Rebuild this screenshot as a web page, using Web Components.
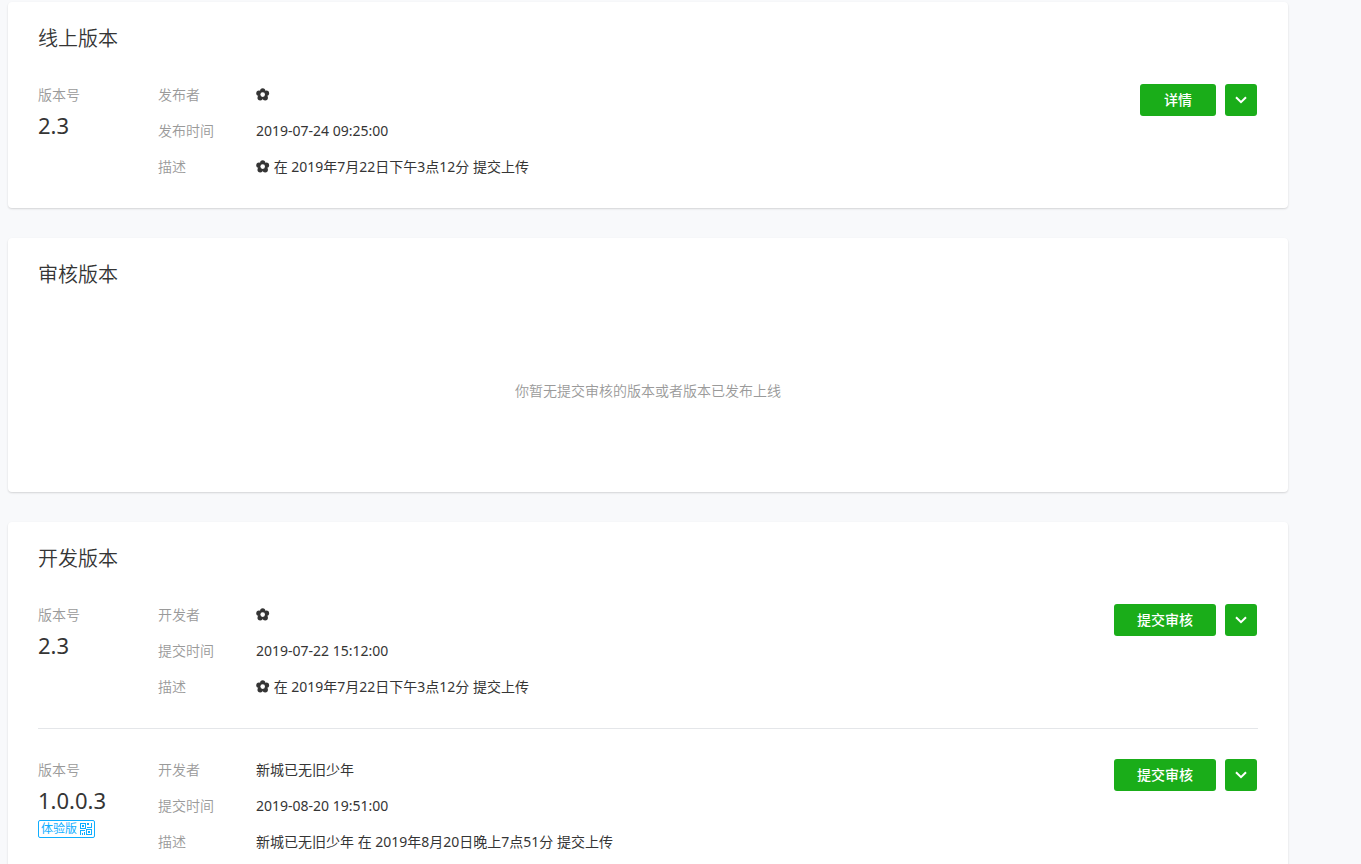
<!DOCTYPE html>
<html lang="zh-CN">
<head>
<meta charset="utf-8">
<meta name="viewport" content="width=device-width, initial-scale=1">
<title>版本管理</title>
<style>
  body {
    margin: 0;
    padding: 2px 73px 30px 8px;
    background: #f8f9fb;
    color: #353535;
    font: 400 14px/22px "Noto Sans", "Noto Sans CJK SC", sans-serif;
  }
  main {
    display: flex;
    flex-direction: column;
    gap: 30px;
  }
</style>
</head>
<body>
<main>
  <version-card heading="线上版本">
    <version-item number="2.3" action="详情">
      <version-field label="发布者"><flower-icon></flower-icon></version-field>
      <version-field label="发布时间">2019-07-24 09:25:00</version-field>
      <version-field label="描述"><flower-icon></flower-icon> 在 2019年7月22日下午3点12分 提交上传</version-field>
    </version-item>
  </version-card>

  <version-card heading="审核版本">
    <empty-tip>你暂无提交审核的版本或者版本已发布上线</empty-tip>
  </version-card>

  <version-card heading="开发版本">
    <version-item number="2.3" action="提交审核">
      <version-field label="开发者"><flower-icon></flower-icon></version-field>
      <version-field label="提交时间">2019-07-22 15:12:00</version-field>
      <version-field label="描述"><flower-icon></flower-icon> 在 2019年7月22日下午3点12分 提交上传</version-field>
    </version-item>
    <version-item number="1.0.0.3" action="提交审核">
      <trial-badge slot="badge">体验版</trial-badge>
      <version-field label="开发者">新城已无旧少年</version-field>
      <version-field label="提交时间">2019-08-20 19:51:00</version-field>
      <version-field label="描述">新城已无旧少年 在 2019年8月20日晚上7点51分 提交上传</version-field>
    </version-item>
  </version-card>
</main>

<script>
function define(name, styles, template) {
  customElements.define(name, class extends HTMLElement {
    connectedCallback() {
      if (this.shadowRoot) return;
      const shadow = this.attachShadow({ mode: 'open' });
      shadow.innerHTML = `<style>${styles}</style>${template(this)}`;
    }
  });
}

define('version-card', `
  :host {
    display: block;
    padding: 23px 30px 30px;
    background: #fff;
    border-radius: 4px;
    box-shadow: 0 1px 2px rgba(0, 0, 0, .15);
  }
  h2 {
    margin: 0 0 31px;
    font-size: 20px;
    font-weight: 350;
    line-height: 28px;
  }
  ::slotted(version-item:not(:first-of-type)) {
    margin-top: 30px;
    padding-top: 30px;
    border-top: 1px solid #e4e6e9;
  }
`, el => `
  <h2>${el.getAttribute('heading')}</h2>
  <slot></slot>
`);

define('version-item', `
  :host {
    display: flex;
    align-items: flex-start;
  }
  .version {
    flex: 0 0 120px;
    display: flex;
    flex-direction: column;
    align-items: flex-start;
  }
  .label {
    color: #9a9a9a;
    font-weight: 350;
  }
  .number {
    margin: 3px 0 4px;
    font-size: 22px;
    line-height: 32px;
  }
  .fields {
    flex: 1;
    display: flex;
    flex-direction: column;
    gap: 14px;
  }
  .actions {
    display: flex;
    gap: 9px;
    padding-right: 1px;
  }
`, el => `
  <div class="version">
    <span class="label">版本号</span>
    <span class="number">${el.getAttribute('number')}</span>
    <slot name="badge"></slot>
  </div>
  <div class="fields"><slot></slot></div>
  <div class="actions">
    <primary-button>${el.getAttribute('action')}</primary-button>
    <more-button></more-button>
  </div>
`);

define('version-field', `
  :host {
    display: flex;
  }
  .label {
    flex: 0 0 98px;
    color: #9a9a9a;
    font-weight: 350;
  }
`, el => `
  <span class="label">${el.getAttribute('label')}</span>
  <span><slot></slot></span>
`);

define('flower-icon', `
  :host {
    display: inline-block;
    vertical-align: -1px;
  }
  svg {
    display: block;
  }
`, () => `
  <svg width="14" height="13" viewBox="0 0 14 13" role="img" aria-label="✿">
    <g fill="currentColor">
      <circle cx="6.7" cy="2.8" r="2.6"/>
      <circle cx="10.4" cy="5.2" r="2.7"/>
      <circle cx="9.2" cy="9.8" r="2.7"/>
      <circle cx="4.2" cy="9.8" r="2.7"/>
      <circle cx="3" cy="5.2" r="2.7"/>
      <circle cx="6.7" cy="6.8" r="3.6"/>
    </g>
    <circle cx="6.7" cy="6.6" r="2.3" fill="#fff"/>
  </svg>
`);

define('empty-tip', `
  :host {
    display: flex;
    align-items: center;
    justify-content: center;
    min-height: 142px;
    color: #9a9a9a;
    font-weight: 350;
  }
`, () => `<slot></slot>`);

define('trial-badge', `
  :host {
    display: block;
  }
  a {
    display: flex;
    align-items: center;
    gap: 3px;
    padding: 0 2px;
    border: 1px solid #10aeff;
    border-radius: 2px;
    color: #10aeff;
    font-size: 12px;
    line-height: 16px;
    text-decoration: none;
  }
  svg {
    display: block;
  }
`, () => `
  <a href="#">
    <slot></slot>
    <svg width="12" height="12" viewBox="0 0 12 12" fill="currentColor" aria-hidden="true">
      <path fill-rule="evenodd" d="M0 0h6v6H0zM1 1v4h4V1zM6 6h6v6H6zM7 7v4h4V7z"/>
      <path d="M2 2h2v2H2zM7 0h2v2H7zM11 0h1v5H7V4h4zM8 8h2v2H8zM0 7h5v1H1v4H0zM2 10h1v2H2zM4 9h1v3H4z"/>
    </svg>
  </a>
`);

define('primary-button', `
  button {
    display: block;
    min-width: 76px;
    height: 32px;
    padding: 0 23px;
    border: 0;
    border-radius: 3px;
    background: #1aad19;
    color: #fff;
    font: inherit;
    font-weight: 500;
    line-height: 32px;
    cursor: pointer;
  }
`, () => `<button type="button"><slot></slot></button>`);

define('more-button', `
  button {
    display: flex;
    align-items: center;
    justify-content: center;
    width: 32px;
    height: 32px;
    padding: 0;
    border: 0;
    border-radius: 3px;
    background: #1aad19;
    color: #fff;
    cursor: pointer;
  }
`, () => `
  <button type="button" aria-label="更多操作">
    <svg width="12" height="8" viewBox="0 0 12 8" fill="none" stroke="currentColor" stroke-width="2" aria-hidden="true">
      <path d="M1 1.2l5 5 5-5"/>
    </svg>
  </button>
`);
</script>
</body>
</html>
